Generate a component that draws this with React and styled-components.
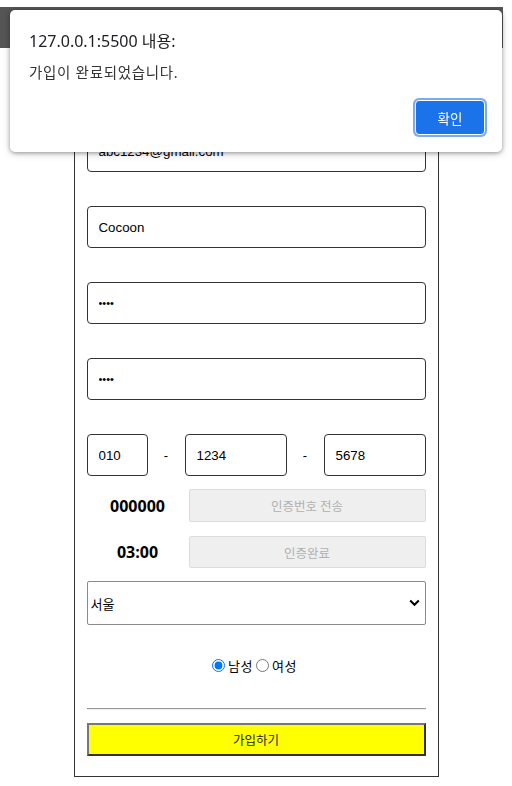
import styled, { createGlobalStyle } from 'styled-components';

const GlobalStyle = createGlobalStyle`
  body {
    margin: 0;
    background: #fff;
    font-family: 'Liberation Sans', 'Noto Sans CJK KR', sans-serif;
  }
`;

const TopBar = styled.div`
  height: 41px;
  margin: 7px 9px 0 0;
  background: #555;
`;

const FormBox = styled.form`
  width: 339px;
  margin: 0 auto;
  padding: 33px 12px 20px;
  border: 1px solid #333;
  border-top: none;
  display: flex;
  flex-direction: column;
`;

const Title = styled.h2`
  margin: 0 0 20px;
  font-size: 20px;
  text-align: center;
`;

const TextInput = styled.input`
  box-sizing: border-box;
  width: ${({ $w }) => $w || '100%'};
  height: 42px;
  padding: 0 11px;
  border: 1px solid #333;
  border-radius: 4px;
  font-family: 'Liberation Sans', sans-serif;
  font-size: 13.3px;
  color: #000;
  margin-bottom: ${({ $mb }) => $mb ?? 34}px;
  outline: none;
  &[type='password'] {
    font-size: 11px;
    letter-spacing: 0;
  }
`;

const PhoneRow = styled.div`
  display: flex;
  align-items: center;
  justify-content: space-between;
  margin-bottom: 13px;
`;

const Dash = styled.span`
  flex: 1;
  text-align: center;
  font-size: 13px;
`;

const CodeRow = styled.div`
  display: flex;
  align-items: center;
  margin-bottom: ${({ $mb }) => $mb}px;
`;

const CodeLabel = styled.span`
  width: 102px;
  text-align: center;
  font-family: 'Open Sans', 'Noto Sans', sans-serif;
  font-weight: 700;
  font-size: 16px;
`;

const GrayButton = styled.button`
  flex: 1;
  height: ${({ $h }) => $h}px;
  background: #efefef;
  border: 1px solid #dcdcdc;
  border-radius: 2px;
  color: #b0b0b0;
  font-family: 'Noto Sans CJK KR', sans-serif;
  font-size: 12.5px;
`;

const SelectWrap = styled.div`
  box-sizing: border-box;
  height: 44px;
  border: 1px solid #8a8a8a;
  border-radius: 2px;
  display: flex;
  align-items: center;
  padding: 0 3px;
  font-family: 'Noto Sans CJK KR', sans-serif;
  font-size: 13px;
  color: #000;
  margin-bottom: 31px;
`;

const SelectText = styled.span`
  flex: 1;
`;

const Chevron = styled.svg`
  width: 11px;
  height: 8px;
  margin-right: 2px;
`;

const RadioRow = styled.div`
  display: flex;
  justify-content: center;
  align-items: center;
  font-family: 'Noto Sans CJK KR', sans-serif;
  font-size: 13px;
  letter-spacing: 0.5px;
  margin-bottom: 33px;
`;

const Radio = styled.input`
  margin: 0 3px 0 0;
  width: 13px;
  height: 13px;
  accent-color: #0075ff;
`;

const RadioLabel = styled.label`
  margin-right: 3px;
`;

const Divider = styled.hr`
  width: 100%;
  margin: 0 0 13px;
  border: none;
  border-top: 1px solid #9a9a9a;
  border-bottom: 1px solid #eee;
`;

const SubmitButton = styled.button`
  height: 33px;
  background: #ff0;
  border: 2px solid;
  border-color: #777 #333 #333 #777;
  font-family: 'Noto Sans CJK KR', sans-serif;
  font-size: 12.5px;
  color: #222;
`;

const Dialog = styled.div`
  position: fixed;
  top: 10px;
  left: 10px;
  width: 492px;
  height: 142px;
  box-sizing: border-box;
  background: #fff;
  border-radius: 5px;
  box-shadow: 0 1px 4px rgba(0, 0, 0, 0.35), 0 2px 8px rgba(0, 0, 0, 0.15);
  padding: 20px 17px 17px 19px;
  font-family: 'Noto Sans', 'Noto Sans CJK KR', sans-serif;
  color: #202124;
  display: flex;
  flex-direction: column;
`;

const DialogTitle = styled.div`
  font-size: 16px;
  line-height: 22px;
  margin-bottom: 10px;
`;

const DialogMessage = styled.div`
  font-size: 14.5px;
  letter-spacing: 0.7px;
  line-height: 20px;
  color: #333;
`;

const DialogActions = styled.div`
  margin-top: auto;
  display: flex;
  justify-content: flex-end;
`;

const OkButton = styled.button`
  width: 70px;
  height: 35px;
  background: #1a73e8;
  color: #fff;
  border: 1px solid #fff;
  border-radius: 4px;
  box-shadow: 0 0 0 2px #7aaaf2;
  font-family: 'Noto Sans CJK KR', sans-serif;
  font-size: 13.5px;
`;

export default function App() {
  return (
    <>
      <GlobalStyle />
      <TopBar />
      <FormBox onSubmit={(e) => e.preventDefault()}>
        <Title>회원가입</Title>
        <TextInput type='text' defaultValue='abc1234@gmail.com' />
        <TextInput type='text' defaultValue='Cocoon' />
        <TextInput type='password' defaultValue='1234' />
        <TextInput type='password' defaultValue='1234' />
        <PhoneRow>
          <TextInput $w='61px' $mb={0} defaultValue='010' />
          <Dash>-</Dash>
          <TextInput $w='102px' $mb={0} defaultValue='1234' />
          <Dash>-</Dash>
          <TextInput $w='102px' $mb={0} defaultValue='5678' />
        </PhoneRow>
        <CodeRow $mb={14}>
          <CodeLabel>000000</CodeLabel>
          <GrayButton type='button' $h={33} disabled>인증번호 전송</GrayButton>
        </CodeRow>
        <CodeRow $mb={13}>
          <CodeLabel>03:00</CodeLabel>
          <GrayButton type='button' $h={32} disabled>인증완료</GrayButton>
        </CodeRow>
        <SelectWrap>
          <SelectText>서울</SelectText>
          <Chevron viewBox='0 0 11 8'>
            <path d='M1.2 1.5 L5.5 5.8 L9.8 1.5' fill='none' stroke='#000' strokeWidth='2' />
          </Chevron>
        </SelectWrap>
        <RadioRow>
          <Radio type='radio' name='gender' id='male' defaultChecked />
          <RadioLabel htmlFor='male'>남성</RadioLabel>
          <Radio type='radio' name='gender' id='female' />
          <RadioLabel htmlFor='female'>여성</RadioLabel>
        </RadioRow>
        <Divider />
        <SubmitButton type='submit'>가입하기</SubmitButton>
      </FormBox>
      <Dialog>
        <DialogTitle>127.0.0.1:5500 내용:</DialogTitle>
        <DialogMessage>가입이 완료되었습니다.</DialogMessage>
        <DialogActions>
          <OkButton type='button'>확인</OkButton>
        </DialogActions>
      </Dialog>
    </>
  );
}
